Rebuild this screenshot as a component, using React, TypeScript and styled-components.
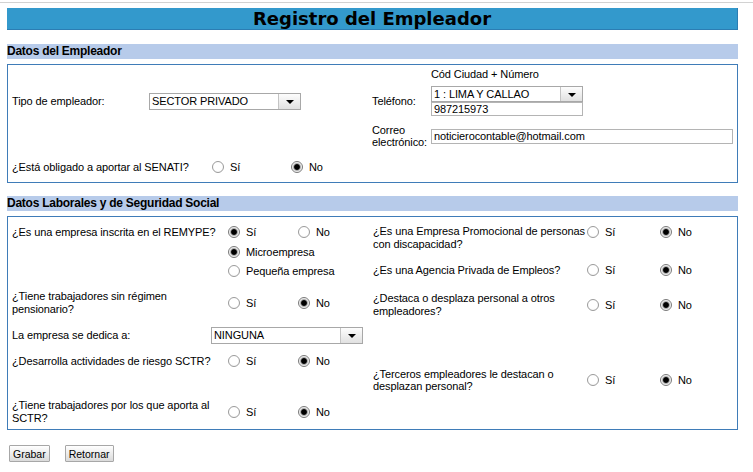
import React from 'react';
import styled, { createGlobalStyle, css } from 'styled-components';

const GlobalStyle = createGlobalStyle`
  body {
    margin: 0;
    background: #ffffff;
    font-family: "Liberation Sans", Arial, sans-serif;
    font-size: 11px;
    letter-spacing: -0.1px;
    color: #000000;
  }
`;

const Page = styled.div`
  padding-top: 2px;
`;

const TopRule = styled.div`
  height: 1px;
  background: #d2d2d2;
  margin-bottom: 5px;
`;

const Content = styled.div`
  width: 731px;
  margin-left: 7px;
`;

const TitleBar = styled.h1`
  margin: 0;
  height: 21px;
  line-height: 21px;
  background: #3399cc;
  border-right: 1px solid #2c7db3;
  border-bottom: 1px solid #2c7db3;
  text-align: center;
  font-family: "DejaVu Sans", Verdana, sans-serif;
  font-weight: bold;
  font-size: 18px;
  letter-spacing: 0;
  color: #000;
`;

const SectionHeader = styled.h2<{ $mt: number }>`
  margin: ${({ $mt }) => $mt}px 0 0;
  height: 15px;
  line-height: 15px;
  background: #b7cbea;
  font-family: "Liberation Sans", Arial, sans-serif;
  font-weight: bold;
  font-size: 12px;
  letter-spacing: -0.25px;
`;

const Box = styled.div`
  margin-top: 5px;
  border: 1px solid #3f7cb8;
`;

const EmployerGrid = styled.div`
  display: grid;
  grid-template-columns: 360px 1fr;
  grid-template-rows: 21px 30px 40px 22px;
  padding: 0 0 4px 4px;
`;

const Cell = styled.div<{ $align?: string; $pt?: number; $pl?: number }>`
  display: flex;
  align-items: ${({ $align }) => $align || 'center'};
  padding-top: ${({ $pt }) => $pt || 0}px;
  padding-left: ${({ $pl }) => $pl || 0}px;
`;

const Field = styled.div<{ $cols: string }>`
  display: grid;
  grid-template-columns: ${({ $cols }) => $cols};
  align-items: center;
  width: 100%;
`;

const Label = styled.span<{ $lh?: number }>`
  white-space: nowrap;
  line-height: ${({ $lh }) => $lh || 13}px;
`;

const Stack = styled.div`
  display: flex;
  flex-direction: column;
`;

const SelectBox = styled.div<{ $w: number; $h: number }>`
  display: flex;
  box-sizing: border-box;
  width: ${({ $w }) => $w}px;
  height: ${({ $h }) => $h}px;
  border: 1px solid #a8a8a8;
  background: #fff;
`;

const SelectText = styled.span`
  flex: 1;
  display: flex;
  align-items: center;
  padding-left: 2px;
  white-space: nowrap;
`;

const SelectArrow = styled.span`
  width: 21px;
  display: flex;
  align-items: center;
  justify-content: center;
  border-left: 1px solid #c4c4c4;
  background: linear-gradient(#fdfdfd, #e1e1e1);

  &::after {
    content: '';
    border-top: 4px solid #000;
    border-left: 4px solid transparent;
    border-right: 4px solid transparent;
    margin-top: 1px;
  }
`;

const TextInput = styled.div<{ $w: number; $h: number }>`
  box-sizing: border-box;
  width: ${({ $w }) => $w}px;
  height: ${({ $h }) => $h}px;
  border: 1px solid #b4b4b4;
  padding-left: 2px;
  display: flex;
  align-items: center;
  background: #fff;
  white-space: nowrap;
`;

const Option = styled.label`
  display: inline-flex;
  align-items: center;
  gap: 6px;
  white-space: nowrap;
`;

const RadioDot = styled.span<{ $on?: boolean }>`
  flex: none;
  box-sizing: border-box;
  width: 12px;
  height: 12px;
  border-radius: 50%;
  border: 1px solid #9a9a9a;
  background: radial-gradient(circle at 50% 40%, #ffffff 55%, #ececec 100%);
  ${({ $on }) =>
    $on &&
    css`
      border-color: #7a7a7a;
      background: radial-gradient(circle, #000 0 2.4px, #555 2.9px, #b9b9b9 3.6px, #e9e9e9 4.4px, #fff 5px);
    `}
`;

const LaborGrid = styled.div`
  display: grid;
  grid-template-columns: 361px 1fr;
  padding-left: 4px;
`;

const Column = styled.div`
  display: flex;
  flex-direction: column;
  padding-top: 5px;
`;

const Row = styled.div<{ $cols: string; $h: number; $mt?: number; $top?: boolean }>`
  display: grid;
  box-sizing: border-box;
  grid-template-columns: ${({ $cols }) => $cols};
  height: ${({ $h }) => $h}px;
  margin-top: ${({ $mt }) => $mt || 0}px;
  align-items: ${({ $top }) => ($top ? 'start' : 'center')};
  ${({ $top }) =>
    $top &&
    css`
      padding-top: 3px;
      & > * {
        min-height: 13px;
      }
    `}
`;

const ButtonBar = styled.div`
  display: flex;
  gap: 15px;
  margin-top: 15px;
  padding-left: 2px;
`;

const Button = styled.button`
  height: 17px;
  padding: 0 3px;
  border: 1px solid #a7a7a7;
  border-radius: 1px;
  background: linear-gradient(#ffffff, #dadada);
  font-family: "Liberation Sans", Arial, sans-serif;
  font-size: 10.5px;
  letter-spacing: 0;
  color: #000;
  cursor: pointer;
`;

const Select = ({ value, w, h }: { value: string; w: number; h: number }) => (
  <SelectBox $w={w} $h={h}>
    <SelectText>{value}</SelectText>
    <SelectArrow />
  </SelectBox>
);

const Radio = ({ on, text }: { on?: boolean; text: string }) => (
  <Option>
    <RadioDot $on={on} />
    {text}
  </Option>
);

const SiNo = ({ yes }: { yes?: boolean }) => (
  <>
    <Radio on={yes} text="Sí" />
    <Radio on={!yes} text="No" />
  </>
);

const LEFT = '216px 70px auto';
const RIGHT = '214px 73px auto';

export default function App() {
  return (
    <Page>
      <GlobalStyle />
      <TopRule />
      <Content>
        <TitleBar>Registro del Empleador</TitleBar>

        <SectionHeader $mt={14}>Datos del Empleador</SectionHeader>
        <Box>
          <EmployerGrid>
            <Cell />
            <Cell $align="flex-start" $pt={3} $pl={59}>
              <Label>Cód Ciudad + Número</Label>
            </Cell>

            <Cell>
              <Field $cols="137px auto">
                <Label>Tipo de empleador:</Label>
                <Select value="SECTOR PRIVADO" w={152} h={17} />
              </Field>
            </Cell>
            <Cell>
              <Field $cols="59px auto">
                <Label>Teléfono:</Label>
                <Stack>
                  <Select value="1 : LIMA Y CALLAO" w={152} h={16} />
                  <TextInput $w={152} $h={14}>987215973</TextInput>
                </Stack>
              </Field>
            </Cell>

            <Cell />
            <Cell>
              <Field $cols="59px auto">
                <Label $lh={12}>
                  Correo
                  <br />
                  electrónico:
                </Label>
                <TextInput $w={302} $h={15}>noticierocontable@hotmail.com</TextInput>
              </Field>
            </Cell>

            <Cell>
              <Field $cols="200px 79px auto">
                <Label>¿Está obligado a aportar al SENATI?</Label>
                <SiNo />
              </Field>
            </Cell>
            <Cell />
          </EmployerGrid>
        </Box>

        <SectionHeader $mt={13}>Datos Laborales y de Seguridad Social</SectionHeader>
        <Box>
          <LaborGrid>
            <Column>
              <Row $cols={LEFT} $h={20}>
                <Label>¿Es una empresa inscrita en el REMYPE?</Label>
                <SiNo yes />
              </Row>
              <Row $cols="216px auto" $h={19}>
                <span />
                <Radio on text="Microempresa" />
              </Row>
              <Row $cols="216px auto" $h={20}>
                <span />
                <Radio text="Pequeña empresa" />
              </Row>
              <Row $cols={LEFT} $h={44}>
                <Label>
                  ¿Tiene trabajadores sin régimen
                  <br />
                  pensionario?
                </Label>
                <SiNo />
              </Row>
              <Row $cols="199px auto" $h={20}>
                <Label>La empresa se dedica a:</Label>
                <Select value="NINGUNA" w={152} h={17} />
              </Row>
              <Row $cols={LEFT} $h={32}>
                <Label>¿Desarrolla actividades de riesgo SCTR?</Label>
                <SiNo />
              </Row>
              <Row $cols={LEFT} $h={34} $mt={18}>
                <Label>
                  ¿Tiene trabajadores por los que aporta al
                  <br />
                  SCTR?
                </Label>
                <SiNo />
              </Row>
            </Column>

            <Column>
              <Row $cols={RIGHT} $h={39} $top>
                <Label>
                  ¿Es una Empresa Promocional de personas
                  <br />
                  con discapacidad?
                </Label>
                <SiNo />
              </Row>
              <Row $cols={RIGHT} $h={18}>
                <Label>¿Es una Agencia Privada de Empleos?</Label>
                <SiNo />
              </Row>
              <Row $cols={RIGHT} $h={52}>
                <Label>
                  ¿Destaca o desplaza personal a otros
                  <br />
                  empleadores?
                </Label>
                <SiNo />
              </Row>
              <Row $cols={RIGHT} $h={98}>
                <Label $lh={12}>
                  ¿Terceros empleadores le destacan o
                  <br />
                  desplazan personal?
                </Label>
                <SiNo />
              </Row>
            </Column>
          </LaborGrid>
        </Box>

        <ButtonBar>
          <Button>Grabar</Button>
          <Button>Retornar</Button>
        </ButtonBar>
      </Content>
    </Page>
  );
}
